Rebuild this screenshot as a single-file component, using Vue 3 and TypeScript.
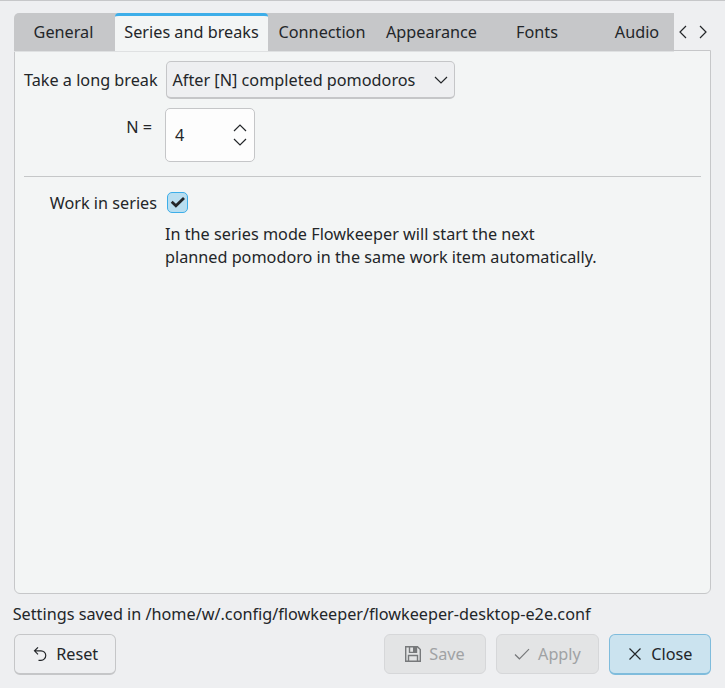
<script setup lang="ts">
import { ref } from 'vue'

interface Tab {
  label: string
  width: number
}

const tabs: Tab[] = [
  { label: 'General', width: 101 },
  { label: 'Series and breaks', width: 153 },
  { label: 'Connection', width: 108 },
  { label: 'Appearance', width: 111 },
  { label: 'Fonts', width: 100 },
  { label: 'Audio', width: 100 },
]
const active = ref<number>(1)
const count = ref<number>(4)
const series = ref<boolean>(true)
</script>

<template>
  <main class="window">
    <nav class="tabbar">
      <div class="tabs">
        <button
          v-for="(tab, i) in tabs"
          :key="tab.label"
          class="tab"
          :class="{ active: i === active }"
          :style="{ width: tab.width + 'px' }"
          @click="active = i"
        >{{ tab.label }}</button>
      </div>
      <div class="scrollers">
        <svg width="10" height="14" viewBox="0 0 10 14"><path d="M8 1 L2 7 L8 13" /></svg>
        <svg width="10" height="14" viewBox="0 0 10 14"><path d="M2 1 L8 7 L2 13" /></svg>
      </div>
    </nav>

    <section class="panel">
      <div class="row first">
        <span class="label">Take a long break</span>
        <div class="combo">
          <span>After [N] completed pomodoros</span>
          <svg width="14" height="8" viewBox="0 0 14 8"><path d="M1 1 L7 7 L13 1" /></svg>
        </div>
      </div>
      <div class="row second">
        <span class="label n-label">N =</span>
        <div class="spin">
          <span>{{ count }}</span>
          <div class="arrows">
            <svg width="14" height="8" viewBox="0 0 14 8" @click="count++"><path d="M1 7 L7 1 L13 7" /></svg>
            <svg width="14" height="8" viewBox="0 0 14 8" @click="count--"><path d="M1 1 L7 7 L13 1" /></svg>
          </div>
        </div>
      </div>
      <div class="divider"></div>
      <div class="row third">
        <span class="label">Work in series</span>
        <div class="check" @click="series = !series">
          <svg v-if="series" width="19" height="18" viewBox="0 0 19 18"><path d="M3.7 8.8 L7.9 12.7 L16 4.9" /></svg>
        </div>
      </div>
      <p class="help">In the series mode Flowkeeper will start the next<br>planned pomodoro in the same work item automatically.</p>
    </section>

    <div class="status">Settings saved in /home/w/.config/flowkeeper/flowkeeper-desktop-e2e.conf</div>

    <footer class="buttons">
      <button class="btn reset">
        <svg width="16" height="16" viewBox="0 0 16 16"><path d="M6 1.3 L2.5 4.8 L6 8.3 M2.5 4.8 H9 A4.75 4.75 0 0 1 9 14.3 H6.5" /></svg>
        <span>Reset</span>
      </button>
      <button class="btn disabled save">
        <svg width="16" height="16" viewBox="0 0 16 16"><path d="M0.7 0.7 H12.5 L15.3 3.5 V15.3 H0.7 Z M4.5 1 V6.4 H11.5 V1 M3.5 15 V9.5 H12.5 V15" /><path class="solid" d="M8 1 H11.5 V6 H8 Z" /></svg>
        <span>Save</span>
      </button>
      <button class="btn disabled apply">
        <svg width="16" height="16" viewBox="0 0 16 16"><path d="M1 8.5 L5.4 12.8 L15 3.2" /></svg>
        <span>Apply</span>
      </button>
      <button class="btn primary">
        <svg width="16" height="16" viewBox="0 0 16 16"><path d="M2.5 2.5 L13.5 13.5 M13.5 2.5 L2.5 13.5" /></svg>
        <span>Close</span>
      </button>
    </footer>
  </main>
</template>

<style>
body {
  background: #eeeff1;
}
</style>

<style scoped>
* {
  box-sizing: border-box;
}
.window {
  width: 725px;
  height: 688px;
  padding: 12px 14px 0;
  border-top: 1px solid #c6c7c9;
  background: #eeeff1;
  color: #232629;
  font: 16.23px/24px "Noto Sans", sans-serif;
  white-space: nowrap;
  overflow: hidden;
}
button {
  font: inherit;
  color: inherit;
  padding: 0;
  border: 0;
}
svg {
  display: block;
  flex: none;
  fill: none;
  stroke: #232629;
  stroke-width: 1.2;
}
.tabbar {
  display: flex;
  height: 37px;
}
.tabs {
  display: flex;
  width: 660px;
  height: 39px;
  overflow: hidden;
  border-radius: 5px 0 0 0;
  background: #c6c7c9;
  border-bottom: 1px solid #dfe1e2;
  z-index: 1;
}
.tab {
  flex: none;
  height: 38px;
  padding: 0 2px 1px 0;
  background: transparent;
}
.tab.active {
  background: #f3f5f5;
  border-top: 3px solid #3daee9;
  border-radius: 4px 4px 0 0;
  padding: 0 0 3px;
}
.tab.active ~ .tab {
  padding-right: 0;
}
.scrollers {
  display: flex;
  gap: 10px;
  padding: 12px 0 0 4px;
}
.panel {
  width: 697px;
  height: 544px;
  border: 1px solid #c6c7c9;
  border-radius: 0 0 6px 6px;
  background: #f3f5f5;
  padding: 10px 9px;
}
.row {
  display: flex;
}
.label {
  width: 133px;
  margin-right: 9px;
  text-align: right;
}
.first {
  height: 39px;
}
.first .label {
  padding-top: 7px;
}
.combo {
  display: flex;
  align-items: center;
  justify-content: space-between;
  width: 289px;
  height: 38px;
  padding: 0 6px 0 5.5px;
  border: 1px solid #c5c6c8;
  border-bottom-width: 2px;
  border-radius: 5px;
  background: #eeeff1;
}
.second {
  margin-top: 8px;
}
.n-label {
  width: 128px;
  margin-right: 13px;
  padding-top: 7px;
}
.spin {
  display: flex;
  align-items: center;
  justify-content: space-between;
  width: 90px;
  height: 54px;
  padding: 0 7px 0 9px;
  border: 1px solid #c5c6c8;
  border-radius: 5px;
  background: #fdfdfd;
}
.arrows {
  display: flex;
  flex-direction: column;
  gap: 6px;
}
.divider {
  height: 1px;
  margin-top: 14px;
  background: #c5c7c8;
}
.third {
  margin-top: 14px;
}
.check {
  width: 21px;
  height: 21px;
  margin: 1px 0 0 1px;
  border: 1px solid #3daee9;
  border-radius: 5px;
  background: #b9def0;
}
.check svg {
  stroke-width: 2.8;
}
.help {
  margin: 8px 0 0 141px;
  line-height: 23px;
}
.status {
  margin: 8px 0 0 -1.3px;
}
.buttons {
  display: flex;
  gap: 10px;
  margin-top: 8px;
}
.btn {
  display: flex;
  align-items: center;
  justify-content: center;
  gap: 8px;
  width: 102.4px;
  height: 41px;
  border: 1px solid #c5c6c8;
  border-bottom-width: 2px;
  border-radius: 6px;
  background: #eeeff1;
}
.save {
  margin-left: auto;
}
.disabled {
  height: 40px;
  color: #a0a2a4;
  background: #e3e4e5;
  border: 1px solid #d6d7d9;
}
.disabled svg {
  stroke: #77797b;
}
.save svg {
  stroke-width: 1.4;
}
.disabled .solid {
  fill: #77797b;
  stroke: none;
}
.primary {
  background: #cbe3ef;
  border-color: #7fbcdc;
}
</style>
